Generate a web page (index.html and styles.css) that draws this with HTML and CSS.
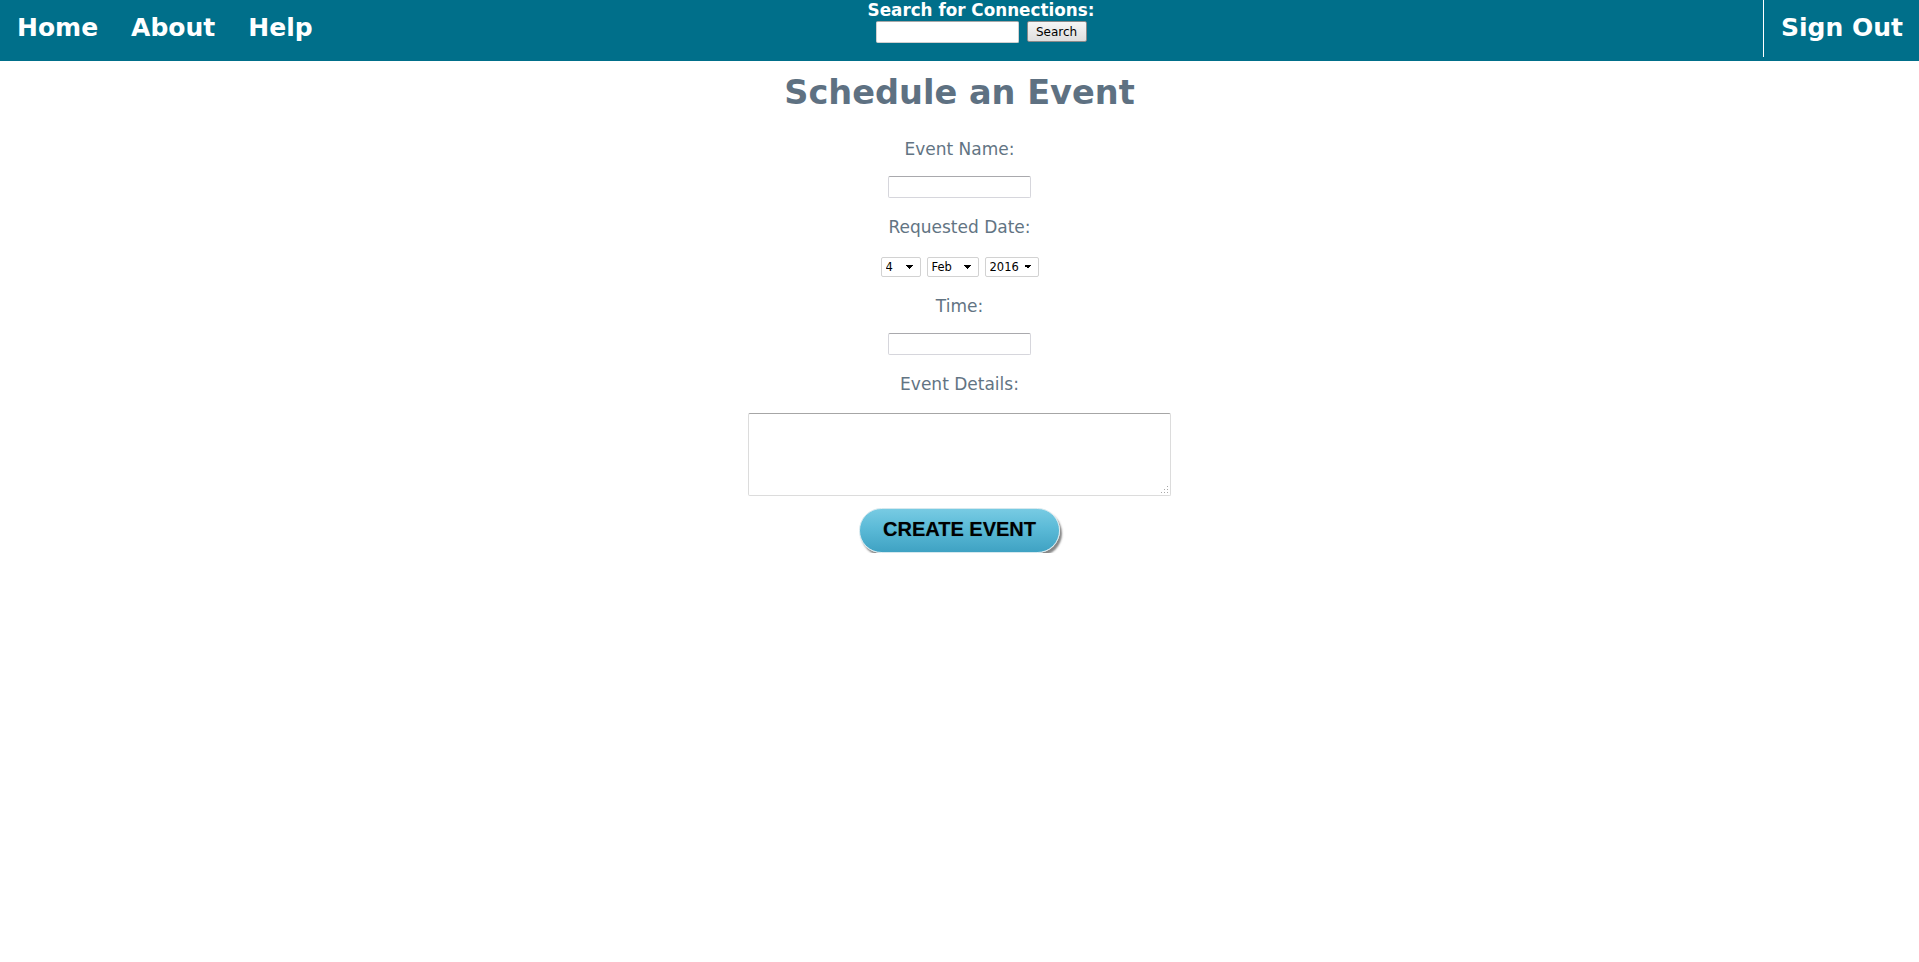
FILE: index.html
```html
<!DOCTYPE html>
<html lang="en">
<head>
<meta charset="utf-8">
<title>Schedule an Event</title>
<link rel="stylesheet" href="styles.css">
</head>
<body>
<header class="topbar">
  <nav class="nav">
    <a class="nav-link" href="#">Home</a>
    <a class="nav-link" href="#">About</a>
    <a class="nav-link" href="#">Help</a>
  </nav>
  <form class="search">
    <div class="search-label">Search for Connections:</div>
    <div class="search-row">
      <input class="search-input" type="text">
      <button class="search-btn" type="button">Search</button>
    </div>
  </form>
  <div class="signout-wrap">
    <a class="signout" href="#">Sign Out</a>
  </div>
</header>

<main class="page">
  <h1 class="title">Schedule an Event</h1>
  <form class="event-form">
    <label class="label label-first">Event Name:</label>
    <input class="field" type="text">

    <label class="label">Requested Date:</label>
    <div class="dates">
      <select class="sel sel-day"><option>4</option></select>
      <select class="sel sel-month"><option>Feb</option></select>
      <select class="sel sel-year"><option>2016</option></select>
    </div>

    <label class="label">Time:</label>
    <input class="field field-time" type="text">

    <label class="label">Event Details:</label>
    <div class="details-wrap">
      <textarea class="details"></textarea>
      <svg class="grip" width="9" height="9" viewBox="0 0 9 9">
        <rect x="7" y="1" width="1" height="1" fill="#a8a8a8"/>
        <rect x="7" y="4" width="1" height="1" fill="#a8a8a8"/>
        <rect x="7" y="7" width="1" height="1" fill="#a8a8a8"/>
        <rect x="4" y="4" width="1" height="1" fill="#a8a8a8"/>
        <rect x="4" y="7" width="1" height="1" fill="#a8a8a8"/>
        <rect x="1" y="7" width="1" height="1" fill="#a8a8a8"/>
      </svg>
    </div>

    <button class="create" type="button">CREATE EVENT</button>
  </form>
</main>
</body>
</html>
```

FILE: styles.css
```css
html, body {
  margin: 0;
  padding: 0;
  background: #ffffff;
}

body {
  font-family: "DejaVu Sans", Verdana, sans-serif;
}

/* ---------- header ---------- */
.topbar {
  height: 61px;
  background: #006f8a;
  display: grid;
  grid-template-columns: 1fr auto 1fr;
  align-items: start;
}

.nav {
  display: flex;
  gap: 33px;
  padding: 13px 0 0 17px;
}

.nav-link,
.signout {
  color: #ffffff;
  text-decoration: none;
  font-weight: bold;
  font-size: 25px;
  line-height: 30px;
}

.search {
  margin: 0;
  padding: 1px 0 0 43px;
  display: flex;
  flex-direction: column;
  align-items: center;
}

.search-label {
  color: #ffffff;
  font-weight: bold;
  font-size: 16.8px;
  line-height: 18px;
}

.search-row {
  display: flex;
  gap: 8px;
  margin-top: 2px;
}

.search-input {
  box-sizing: border-box;
  width: 143px;
  height: 22px;
  margin: 0;
  border: 1px solid #d0d0d0;
  border-top-color: #a8a8a8;
  border-radius: 2px;
  background: #fff;
  padding: 0 3px;
}

.search-btn {
  box-sizing: border-box;
  width: 60px;
  height: 21px;
  margin: 0;
  padding: 0;
  border: 1px solid #8a8a8a;
  border-radius: 2px;
  background: linear-gradient(#f6f6f6, #dedede);
  color: #000;
  font-family: "DejaVu Sans", Tahoma, sans-serif;
  font-size: 12px;
}

.signout-wrap {
  justify-self: end;
  box-sizing: border-box;
  height: 57px;
  border-left: 1px solid #ffffff;
  padding: 13px 16px 0 17px;
}

/* ---------- page ---------- */
.page {
  display: flex;
  flex-direction: column;
  align-items: center;
}

.title {
  margin: 12px 0 0;
  font-size: 33.6px;
  line-height: 40px;
  font-weight: bold;
  color: #5e7182;
}

.event-form {
  display: flex;
  flex-direction: column;
  align-items: center;
}

.label {
  display: block;
  margin-top: 19px;
  font-size: 17px;
  line-height: 20px;
  color: #627483;
}

.label-first {
  margin-top: 25.5px;
}

.field {
  box-sizing: border-box;
  width: 143px;
  height: 22px;
  margin: 17px 0 0;
  border: 1px solid #d6d6dc;
  border-top-color: #a9a9ad;
  border-radius: 2px;
  background: #fff;
}

.field-time {
  margin-top: 17.5px;
}

.dates {
  display: flex;
  gap: 6px;
  margin-top: 20px;
}

.sel {
  -webkit-appearance: none;
  appearance: none;
  box-sizing: border-box;
  height: 20px;
  margin: 0;
  padding: 0 0 0 4px;
  border: 1px solid #d2d2d2;
  border-radius: 2px;
  color: #000;
  font-family: "DejaVu Sans", Tahoma, sans-serif;
  font-size: 11.5px;
  background-color: #fff;
  background-image:
    linear-gradient(45deg, transparent 50%, #000 50%),
    linear-gradient(135deg, #000 50%, transparent 50%);
  background-size: 4px 4px, 4px 4px;
  background-position: right 10px top 7px, right 6px top 7px;
  background-repeat: no-repeat;
}

.sel-day { width: 40px; }
.sel-month { width: 52px; }
.sel-year { width: 54px; }

.details-wrap {
  position: relative;
  margin-top: 18.5px;
}

.details {
  display: block;
  box-sizing: border-box;
  width: 423px;
  height: 83px;
  margin: 0;
  border: 1px solid #dcdcdc;
  border-top-color: #a6a6a6;
  border-radius: 2px;
  resize: none;
  background: #fff;
}

.grip {
  position: absolute;
  right: 2px;
  bottom: 2px;
}

.create {
  box-sizing: border-box;
  width: 201px;
  height: 45px;
  margin-top: 12px;
  padding: 0 0 1px;
  border: 1px solid #d4e8ee;
  border-radius: 23px;
  background: linear-gradient(#78cbe3 0%, #5bbad7 45%, #3fa2c3 100%);
  box-shadow: 2px 3px 2px rgba(70, 70, 70, 0.65);
  color: #000;
  font-family: "Liberation Sans", Arial, sans-serif;
  font-weight: bold;
  font-size: 20px;
  text-shadow: 0 0 1px rgba(0, 0, 0, 0.35);
}
```
